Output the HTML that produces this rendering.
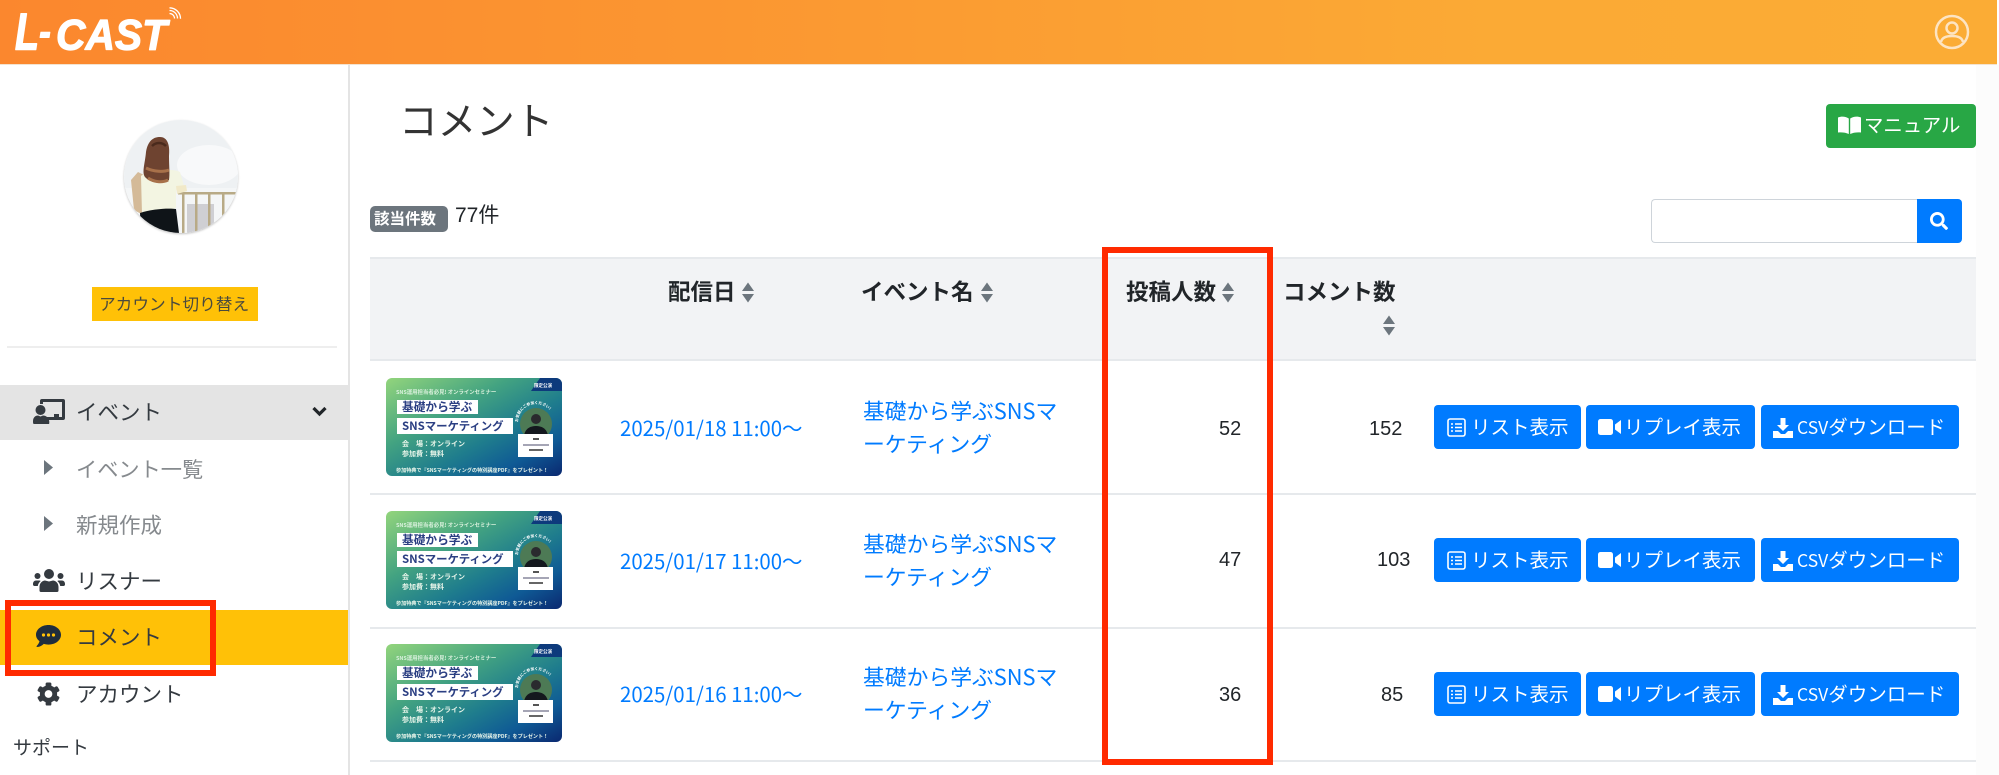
<!DOCTYPE html>
<html lang="ja">
<head>
<meta charset="utf-8">
<title>コメント</title>
<style>
html,body{margin:0;padding:0;background:#fff}
body{width:1999px;height:775px;position:relative;overflow:hidden;font-family:"Liberation Sans","Noto Sans CJK JP",sans-serif;color:#212529}
.a{position:absolute;white-space:nowrap}
.t{position:absolute;white-space:nowrap;font-family:"Noto Sans CJK JP",sans-serif}
svg{display:block;overflow:hidden}
.th{position:absolute;left:386px;width:176px;height:98px;border-radius:6px;overflow:hidden}
.th text{font-family:"Noto Sans CJK JP",sans-serif}
.blue{color:#007bff}
.btn{position:absolute;height:44px;background:#007bff;border-radius:4px;color:#fff;font:19.5px/42px "Noto Sans CJK JP",sans-serif;white-space:nowrap}
.btn svg{position:absolute}
.btn span{position:absolute;top:0}
.num{position:absolute;font-size:20px;line-height:24px;color:#212529}
.menu{font-size:21.5px;line-height:30px;color:#343a40}
.hd{font-weight:700;font-size:22.5px;line-height:30px;color:#212529}
.rb{position:absolute;border:6px solid #ff2a00;box-sizing:border-box}
.line{position:absolute;left:370px;width:1606px;height:2px;background:#e6e9ec}
</style>
</head>
<body>
<!-- header -->
<div class="a" style="left:0;top:0;width:1997px;height:64px;background:linear-gradient(90deg,#fb872e 0%,#fb9631 35%,#fbaa35 75%,#fbac35 100%)"></div>
<div class="a" style="left:0;top:64px;width:1997px;height:1px;background:#f3e3d0"></div>
<div class="a" style="left:1976px;top:65px;width:23px;height:710px;background:#fcfcfc"></div>
<svg class="a" style="left:0;top:0" width="190" height="64" viewBox="0 0 190 64" fill="#fff" stroke="#fff" stroke-linejoin="round" font-family="Liberation Sans" font-weight="700" font-style="italic">
<text x="15" y="49.500" font-size="52" stroke-width="1.500" textLength="24" lengthAdjust="spacingAndGlyphs">L</text>
<text x="39" y="46" font-size="44" stroke-width="1" textLength="12" lengthAdjust="spacingAndGlyphs">-</text>
<text x="56" y="49.500" font-size="43" stroke-width="1.200" textLength="111" lengthAdjust="spacingAndGlyphs">CAST</text>
</svg>
<svg class="a" style="left:168px;top:7px" width="14" height="14" viewBox="0 0 14 14" fill="none" stroke="#fff" stroke-width="1.300"><path d="M1.500 6.500a5 5 0 0 1 5 5M1.500 3.500a8 8 0 0 1 8 8M1.500.800a11 11 0 0 1 11 11"/></svg>
<svg class="a" style="left:1934px;top:14px" width="36" height="36" viewBox="0 0 36 36" fill="none" stroke="#fde4c2" stroke-width="2.500"><circle cx="18" cy="18" r="16"/><circle cx="18" cy="14" r="5.500"/><path d="M7 28c1-5 6-6 11-6s10 1 11 6"/></svg>

<!-- sidebar -->
<div class="a" style="left:348px;top:65px;width:1.500px;height:710px;background:#e4e4e4"></div>
<svg class="a" style="left:124px;top:120px;border-radius:50%;box-shadow:0 1px 2px rgba(0,0,0,.25)" width="114" height="113" viewBox="0 0 114 113">
<rect width="114" height="113" fill="#eef1f3"/>
<ellipse cx="85" cy="45" rx="32" ry="20" fill="#f8f9fa"/>
<rect y="68" width="114" height="45" fill="#f4f6f7"/>
<rect x="63" y="84" width="27" height="29" fill="#cfcfd3"/>
<path d="M7 60L14 52 20 55 19 95 10 90z" fill="#d4ba98"/>
<path d="M17 56C24 50 48 48 56 52L60 66 52 70 52 88 40 92 18 94z" fill="#f3f5e2"/>
<path d="M16 93C28 89 44 88 52 89L55 113H17z" fill="#0f1418"/>
<path d="M54 72h58v2.500H54zM58 73h2.500v40H58zM71 73h2.500v40H71zM84 73h2.500v40H84zM98 73h2.500v40H98z" fill="#b8aa86"/>
<path d="M52 66l10-1 1 6-10 3z" fill="#f1e9c8"/>
<path d="M22 32C24 20 30 17 36 17 44 17 46 26 45 36 45 46 46 54 45 60 40 64 28 64 22 58 17 54 21 44 22 32z" fill="#6e4330"/>
<path d="M24 58c6 4 14 5 20 2M22 48c8 4 18 4 23 2" stroke="#a8714a" fill="none" stroke-width="3"/>
<path d="M28 26c4-4 10-4 14 0" stroke="#4a2a1c" fill="none" stroke-width="2.500"/>
</svg>
<div class="a" style="left:92px;top:287px;width:166px;height:34px;background:#ffc107"></div>
<div class="t" style="left:99px;top:286px;font-size:16.700px;line-height:34px;color:#4a4a3e">アカウント切り替え</div>
<div class="a" style="left:7px;top:346px;width:330px;height:2px;background:#eeeeee"></div>

<div class="a" style="left:0;top:385px;width:348px;height:55px;background:#e4e4e4"></div>
<div class="a" style="left:0;top:610px;width:348px;height:55px;background:#ffc107"></div>

<!-- chalkboard teacher -->
<svg class="a" style="left:33px;top:399px" width="32" height="25" viewBox="0 0 32 25" fill="#343a40"><path d="M9 0h21a2 2 0 0 1 2 2v17a2 2 0 0 1-2 2H15v-3h14V3H10v2H7V2a2 2 0 0 1 2-2z"/><circle cx="7.500" cy="11" r="5"/><path d="M0 22c0-4 3-5.500 5-5.500l2.500 1 2.500-1c1.500 0 3 .6 4 1.500h7v-3h5v6h-10c.3 1 .3 2 .3 3 0 1-.8 1.500-1.800 1.500H2c-1.200 0-2-.8-2-2.500z"/></svg>
<div class="t menu" style="left:76px;top:397px;color:#343a40">イベント</div>
<svg class="a" style="left:312px;top:406px" width="15" height="11" viewBox="0 0 15 11" fill="none" stroke="#212529" stroke-width="3.200"><path d="M1.500 2l6 6 6-6"/></svg>
<svg class="a" style="left:44px;top:460px" width="9" height="15" viewBox="0 0 9 15" fill="#6c757d"><path d="M0 0l9 7.500L0 15z"/></svg>
<div class="t menu" style="left:76px;top:454px;color:#868a8e;font-size:21.200px">イベント一覧</div>
<svg class="a" style="left:44px;top:516px" width="9" height="15" viewBox="0 0 9 15" fill="#6c757d"><path d="M0 0l9 7.500L0 15z"/></svg>
<div class="t menu" style="left:76px;top:510px;color:#868a8e">新規作成</div>
<!-- users -->
<svg class="a" style="left:33px;top:569px" width="32" height="23" viewBox="0 0 32 23" fill="#343a40"><circle cx="16" cy="5" r="5"/><circle cx="4.500" cy="7" r="3"/><circle cx="27.500" cy="7" r="3"/><path d="M8 23c-1 0-1.500-.6-1.500-1.500V18c0-4 3-6.500 5.500-6.500l4 1 4-1c2.500 0 5.500 2.500 5.500 6.500v3.500c0 .9-.5 1.500-1.500 1.500z"/><path d="M0 15c0-2 1.200-3.500 3-3.500h3.200c.5 0 1 .2 1.500.5C5.800 13.500 5 15.500 4.800 17H1.500C.6 17 0 16.300 0 15.500zM32 15c0-2-1.200-3.500-3-3.500h-3.200c-.5 0-1 .2-1.500.5 1.900 1.500 2.700 3.500 2.900 5h3.300c.9 0 1.500-.7 1.500-1.500z"/></svg>
<div class="t menu" style="left:76px;top:566px;color:#343a40">リスナー</div>
<!-- comment dots -->
<svg class="a" style="left:36px;top:625px" width="25" height="23" viewBox="0 0 25 23"><path fill="#1f2d3d" d="M12.500 0C19.400 0 25 4.300 25 9.800s-5.600 9.800-12.500 9.800c-1.700 0-3.300-.3-4.800-.7C6.300 20.500 3.800 22 1 22c-.4 0-.7-.6-.3-1 .8-.9 2.400-3 2.800-4.800C1.300 14.500 0 12.300 0 9.800 0 4.300 5.600 0 12.500 0z"/><circle cx="7.500" cy="10" r="1.600" fill="#ffc107"/><circle cx="12.500" cy="10" r="1.600" fill="#ffc107"/><circle cx="17.500" cy="10" r="1.600" fill="#ffc107"/></svg>
<div class="t menu" style="left:76px;top:622px;color:#343a40">コメント</div>
<!-- cog -->
<svg class="a" style="left:37px;top:682px" width="23" height="24" viewBox="0 0 24 24"><g fill="#343a40"><circle cx="12" cy="12" r="9"/><rect x="9" y="0" width="6" height="24" rx="1.500"/><rect x="9" y="0" width="6" height="24" rx="1.500" transform="rotate(60 12 12)"/><rect x="9" y="0" width="6" height="24" rx="1.500" transform="rotate(120 12 12)"/></g><circle cx="12" cy="12" r="4" fill="#fff"/></svg>
<div class="t menu" style="left:76px;top:679px;color:#343a40">アカウント</div>
<div class="t" style="left:13px;top:733px;font-size:19px;line-height:28px;color:#343a40">サポート</div>

<!-- main head -->
<div class="t" style="left:399px;top:92px;font-size:38.600px;line-height:54px;color:#333;font-weight:400">コメント</div>
<div class="a" style="left:1826px;top:104px;width:150px;height:44px;background:#28a745;border-radius:4px"></div>
<svg class="a" style="left:1838px;top:116px" width="23" height="18" viewBox="0 0 23 18" fill="#fff"><path d="M0 1.500C3.500 0 8 .500 10.800 2.500V18C8 16.500 3.500 16 0 16.500zM23 1.500C19.500 0 15 .500 12.200 2.500V18C15 16.500 19.500 16 23 16.500z"/></svg>
<div class="t" style="left:1864px;top:102px;font-size:19.400px;line-height:44px;color:#fff">マニュアル</div>

<div class="a" style="left:370px;top:206px;width:78px;height:26px;background:#6c757d;border-radius:5px"></div>
<div class="t" style="left:374px;top:205px;font-size:15.500px;font-weight:700;line-height:26px;color:#fff">該当件数</div>
<div class="a" style="left:455px;top:202px;font-size:21px;line-height:28px;font-family:'Liberation Sans','Noto Sans CJK JP',sans-serif">77件</div>

<div class="a" style="left:1651px;top:199px;width:267px;height:44px;border:1.500px solid #ced4da;border-right:0;border-radius:4px 0 0 4px;box-sizing:border-box;background:#fff"></div>
<div class="a" style="left:1917px;top:199px;width:45px;height:44px;background:#007bff;border-radius:0 4px 4px 0"></div>
<svg class="a" style="left:1930px;top:212px" width="18" height="18" viewBox="0 0 512 512"><path fill="#fff" d="M505 442.700L405.300 343c-4.500-4.500-10.600-7-17-7H372c27.600-35.300 44-79.700 44-128C416 93.100 322.900 0 208 0S0 93.100 0 208s93.100 208 208 208c48.300 0 92.700-16.400 128-44v16.300c0 6.400 2.500 12.500 7 17l99.700 99.700c9.400 9.400 24.600 9.400 33.900 0l28.300-28.300c9.400-9.400 9.400-24.600.1-34zM208 336c-70.700 0-128-57.200-128-128 0-70.700 57.200-128 128-128 70.700 0 128 57.200 128 128 0 70.700-57.200 128-128 128z"/></svg>

<!-- table head -->
<div class="a" style="left:370px;top:257px;width:1606px;height:103px;background:#f2f3f5"></div>
<div class="line" style="top:257px"></div>
<div class="line" style="top:359px"></div>
<div class="line" style="top:493px"></div>
<div class="line" style="top:627px"></div>
<div class="line" style="top:760px"></div>

<div class="t hd" style="left:668px;top:276px">配信日</div>
<svg class="a" style="left:741px;top:282px" width="14" height="21" viewBox="0 0 14 20" fill="#6c757d"><path d="M7 0l6 8.500H1zM7 20l-6-8.500h12z"/></svg>
<div class="t hd" style="left:861px;top:276px">イベント名</div>
<svg class="a" style="left:980px;top:282px" width="14" height="21" viewBox="0 0 14 20" fill="#6c757d"><path d="M7 0l6 8.500H1zM7 20l-6-8.500h12z"/></svg>
<div class="t hd" style="left:1126px;top:276px">投稿人数</div>
<svg class="a" style="left:1221px;top:282px" width="14" height="21" viewBox="0 0 14 20" fill="#6c757d"><path d="M7 0l6 8.500H1zM7 20l-6-8.500h12z"/></svg>
<div class="t hd" style="left:1283px;top:276px">コメント数</div>
<svg class="a" style="left:1382px;top:315px" width="14" height="21" viewBox="0 0 14 20" fill="#6c757d"><path d="M7 0l6 8.500H1zM7 20l-6-8.500h12z"/></svg>

<!-- row 1 -->
<div class="th" style="top:378px"><svg width="176" height="98" viewBox="0 0 176 98"><defs><linearGradient id="g1" x1="0" y1="0" x2="1" y2="1"><stop offset="0" stop-color="#93d57c"/><stop offset=".35" stop-color="#43a381"/><stop offset=".6" stop-color="#1f7d8d"/><stop offset=".8" stop-color="#0f5a95"/><stop offset="1" stop-color="#0a2870"/></linearGradient><path id="arc" d="M132 44a18 18 0 0 1 36 0"/></defs><rect width="176" height="98" fill="url(#g1)"/><path d="M154 0h22v13h-31z" fill="#0d3a7c"/><text x="10" y="16" font-size="5.400" fill="#d8f0dc" font-weight="700">SNS運用担当者必見! オンラインセミナー</text><text x="148" y="9" font-size="4.500" fill="#fff" font-weight="700">限定公演</text><rect x="11" y="22" width="81" height="14" fill="#fff"/><text x="16" y="33" font-size="11.700" fill="#2b3f83" font-weight="700">基礎から学ぶ</text><rect x="11" y="40" width="116" height="16" fill="#fff"/><text x="16" y="52" font-size="11.400" fill="#2b3f83" font-weight="700">SNSマーケティング</text><text x="16" y="68" font-size="7" fill="#e8f5ea" font-weight="700">会　場：オンライン</text><text x="16" y="78" font-size="7" fill="#e8f5ea" font-weight="700">参加費：無料</text><text x="10" y="94" font-size="5.100" fill="#e8f5ea" font-weight="700">参加特典で『SNSマーケティングの特別講座PDF』をプレゼント！</text><circle cx="150" cy="46" r="16" fill="#4d7a55"/><circle cx="150" cy="41" r="5" fill="#2a2a2e"/><path d="M138 58c1-8 7-10 12-10s11 2 12 10l-6 4h-12z" fill="#14181e"/><rect x="132" y="56" width="35" height="23" fill="#fff"/><rect x="147" y="60" width="6" height="2" fill="#555"/><rect x="137" y="66" width="26" height="2" fill="#a5a5b5"/><rect x="143" y="71" width="14" height="2" fill="#666"/><text font-size="3.800" fill="#fff" font-weight="700"><textPath href="#arc">お気軽にご参加ください!</textPath></text></svg></div>
<div class="t blue" style="left:620px;top:412px;font-size:20.400px;line-height:30px">2025/01/18 11:00〜</div>
<div class="t blue" style="left:863px;top:394px;font-size:21.800px;line-height:33px">基礎から学ぶSNSマ<br>ーケティング</div>
<div class="num" style="left:1219px;top:417px">52</div>
<div class="num" style="left:1369px;top:417px">152</div>

<!-- row 2 -->
<div class="th" style="top:511px"><svg width="176" height="98" viewBox="0 0 176 98"><rect width="176" height="98" fill="url(#g1)"/><path d="M154 0h22v13h-31z" fill="#0d3a7c"/><text x="10" y="16" font-size="5.400" fill="#d8f0dc" font-weight="700">SNS運用担当者必見! オンラインセミナー</text><text x="148" y="9" font-size="4.500" fill="#fff" font-weight="700">限定公演</text><rect x="11" y="22" width="81" height="14" fill="#fff"/><text x="16" y="33" font-size="11.700" fill="#2b3f83" font-weight="700">基礎から学ぶ</text><rect x="11" y="40" width="116" height="16" fill="#fff"/><text x="16" y="52" font-size="11.400" fill="#2b3f83" font-weight="700">SNSマーケティング</text><text x="16" y="68" font-size="7" fill="#e8f5ea" font-weight="700">会　場：オンライン</text><text x="16" y="78" font-size="7" fill="#e8f5ea" font-weight="700">参加費：無料</text><text x="10" y="94" font-size="5.100" fill="#e8f5ea" font-weight="700">参加特典で『SNSマーケティングの特別講座PDF』をプレゼント！</text><circle cx="150" cy="46" r="16" fill="#4d7a55"/><circle cx="150" cy="41" r="5" fill="#2a2a2e"/><path d="M138 58c1-8 7-10 12-10s11 2 12 10l-6 4h-12z" fill="#14181e"/><rect x="132" y="56" width="35" height="23" fill="#fff"/><rect x="147" y="60" width="6" height="2" fill="#555"/><rect x="137" y="66" width="26" height="2" fill="#a5a5b5"/><rect x="143" y="71" width="14" height="2" fill="#666"/><text font-size="3.800" fill="#fff" font-weight="700"><textPath href="#arc">お気軽にご参加ください!</textPath></text></svg></div>
<div class="t blue" style="left:620px;top:545px;font-size:20.400px;line-height:30px">2025/01/17 11:00〜</div>
<div class="t blue" style="left:863px;top:527px;font-size:21.800px;line-height:33px">基礎から学ぶSNSマ<br>ーケティング</div>
<div class="num" style="left:1219px;top:548px">47</div>
<div class="num" style="left:1377px;top:548px">103</div>

<!-- row 3 -->
<div class="th" style="top:644px"><svg width="176" height="98" viewBox="0 0 176 98"><rect width="176" height="98" fill="url(#g1)"/><path d="M154 0h22v13h-31z" fill="#0d3a7c"/><text x="10" y="16" font-size="5.400" fill="#d8f0dc" font-weight="700">SNS運用担当者必見! オンラインセミナー</text><text x="148" y="9" font-size="4.500" fill="#fff" font-weight="700">限定公演</text><rect x="11" y="22" width="81" height="14" fill="#fff"/><text x="16" y="33" font-size="11.700" fill="#2b3f83" font-weight="700">基礎から学ぶ</text><rect x="11" y="40" width="116" height="16" fill="#fff"/><text x="16" y="52" font-size="11.400" fill="#2b3f83" font-weight="700">SNSマーケティング</text><text x="16" y="68" font-size="7" fill="#e8f5ea" font-weight="700">会　場：オンライン</text><text x="16" y="78" font-size="7" fill="#e8f5ea" font-weight="700">参加費：無料</text><text x="10" y="94" font-size="5.100" fill="#e8f5ea" font-weight="700">参加特典で『SNSマーケティングの特別講座PDF』をプレゼント！</text><circle cx="150" cy="46" r="16" fill="#4d7a55"/><circle cx="150" cy="41" r="5" fill="#2a2a2e"/><path d="M138 58c1-8 7-10 12-10s11 2 12 10l-6 4h-12z" fill="#14181e"/><rect x="132" y="56" width="35" height="23" fill="#fff"/><rect x="147" y="60" width="6" height="2" fill="#555"/><rect x="137" y="66" width="26" height="2" fill="#a5a5b5"/><rect x="143" y="71" width="14" height="2" fill="#666"/><text font-size="3.800" fill="#fff" font-weight="700"><textPath href="#arc">お気軽にご参加ください!</textPath></text></svg></div>
<div class="t blue" style="left:620px;top:678px;font-size:20.400px;line-height:30px">2025/01/16 11:00〜</div>
<div class="t blue" style="left:863px;top:660px;font-size:21.800px;line-height:33px">基礎から学ぶSNSマ<br>ーケティング</div>
<div class="num" style="left:1219px;top:683px">36</div>
<div class="num" style="left:1381px;top:683px">85</div>

<!-- row 1 buttons -->
<div class="btn" style="left:1434px;top:405px;width:147px"><svg style="left:13px;top:13px" width="19" height="19" viewBox="0 0 19 19" fill="none" stroke="#fff" stroke-width="1.600"><rect x="1" y="1" width="17" height="17" rx="2"/><path d="M4 6h2M8 6h7M4 9.500h2M8 9.500h7M4 13h2M8 13h7"/></svg><span style="left:37px">リスト表示</span></div>
<div class="btn" style="left:1586px;top:405px;width:169px"><svg style="left:12px;top:14px" width="23" height="16" viewBox="0 0 23 16" fill="#fff"><rect width="15" height="16" rx="2.500"/><path d="M17 5.500L23 1v14l-6-4.500z"/></svg><span style="left:38px">リプレイ表示</span></div>
<div class="btn" style="left:1761px;top:405px;width:198px"><svg style="left:12px;top:13px" width="20" height="20" viewBox="0 0 20 20" fill="#fff"><path d="M7.500 0h5v7H16l-6 6-6-6h3.500z"/><path d="M0 13h5l3 3h4l3-3h5v7H0z"/></svg><span style="left:36px"><span style="position:static;font-size:17.500px">CSV</span>ダウンロード</span></div>
<!-- row 2 buttons -->
<div class="btn" style="left:1434px;top:538px;width:147px"><svg style="left:13px;top:13px" width="19" height="19" viewBox="0 0 19 19" fill="none" stroke="#fff" stroke-width="1.600"><rect x="1" y="1" width="17" height="17" rx="2"/><path d="M4 6h2M8 6h7M4 9.500h2M8 9.500h7M4 13h2M8 13h7"/></svg><span style="left:37px">リスト表示</span></div>
<div class="btn" style="left:1586px;top:538px;width:169px"><svg style="left:12px;top:14px" width="23" height="16" viewBox="0 0 23 16" fill="#fff"><rect width="15" height="16" rx="2.500"/><path d="M17 5.500L23 1v14l-6-4.500z"/></svg><span style="left:38px">リプレイ表示</span></div>
<div class="btn" style="left:1761px;top:538px;width:198px"><svg style="left:12px;top:13px" width="20" height="20" viewBox="0 0 20 20" fill="#fff"><path d="M7.500 0h5v7H16l-6 6-6-6h3.500z"/><path d="M0 13h5l3 3h4l3-3h5v7H0z"/></svg><span style="left:36px"><span style="position:static;font-size:17.500px">CSV</span>ダウンロード</span></div>
<!-- row 3 buttons -->
<div class="btn" style="left:1434px;top:672px;width:147px"><svg style="left:13px;top:13px" width="19" height="19" viewBox="0 0 19 19" fill="none" stroke="#fff" stroke-width="1.600"><rect x="1" y="1" width="17" height="17" rx="2"/><path d="M4 6h2M8 6h7M4 9.500h2M8 9.500h7M4 13h2M8 13h7"/></svg><span style="left:37px">リスト表示</span></div>
<div class="btn" style="left:1586px;top:672px;width:169px"><svg style="left:12px;top:14px" width="23" height="16" viewBox="0 0 23 16" fill="#fff"><rect width="15" height="16" rx="2.500"/><path d="M17 5.500L23 1v14l-6-4.500z"/></svg><span style="left:38px">リプレイ表示</span></div>
<div class="btn" style="left:1761px;top:672px;width:198px"><svg style="left:12px;top:13px" width="20" height="20" viewBox="0 0 20 20" fill="#fff"><path d="M7.500 0h5v7H16l-6 6-6-6h3.500z"/><path d="M0 13h5l3 3h4l3-3h5v7H0z"/></svg><span style="left:36px"><span style="position:static;font-size:17.500px">CSV</span>ダウンロード</span></div>

<!-- red highlights -->
<div class="rb" style="left:5px;top:600px;width:211px;height:76px"></div>
<div class="rb" style="left:1102px;top:247px;width:171px;height:518px"></div>
</body>
</html>
